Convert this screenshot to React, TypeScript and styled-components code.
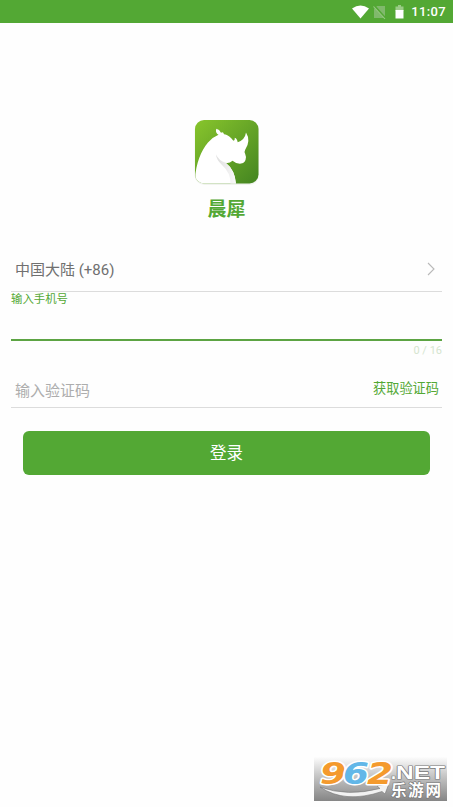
import React from "react";
import styled, { createGlobalStyle } from "styled-components";

const Global = createGlobalStyle`
  * { box-sizing: border-box; }
  body { margin: 0; background: #fefefe; font-family: Roboto, "Noto Sans CJK SC", sans-serif; }
`;
const Screen = styled.div`
  width: 453px; height: 807px; overflow: hidden; background: #fefefe;
  display: flex; flex-direction: column;
`;
const StatusBar = styled.header`
  height: 23px; flex: none; background: #53a834; color: #fff;
  display: flex; align-items: center; justify-content: flex-end;
  padding-right: 7px;
`;
const Clock = styled.time`
  font-size: 13px; line-height: 22px; font-weight: 500; letter-spacing: 0.35px; margin-left: 6px;
`;
const Brand = styled.section`
  height: 229px; flex: none; padding: 97px 0 0;
  display: flex; flex-direction: column; align-items: center;
`;
const AppName = styled.h1`
  margin: 11px 0 0; font-size: 19px; line-height: 29px; font-weight: 700; color: #53a834;
`;
const Form = styled.form`
  padding: 0 11px; display: flex; flex-direction: column;
`;
const Row = styled.div<{ $height: number }>`
  height: ${(p) => p.$height}px; padding: 0 3px 0 4px;
  display: flex; align-items: center; justify-content: space-between;
  border-bottom: 1px solid #dcdcdc;
`;
const RowText = styled.span<{ $muted?: boolean }>`
  font-size: 15px; line-height: 22px; color: ${(p) => (p.$muted ? "#adadad" : "#707070")};
  margin-top: ${(p) => (p.$muted ? 3 : -3)}px;
`;
const PhoneField = styled.div`
  height: 49px; border-bottom: 2px solid #5ca443;
`;
const FieldLabel = styled.label`
  display: block; font-size: 11.4px; line-height: 15px; color: #53a834;
`;
const Counter = styled.span`
  height: 30px; text-align: right; font-size: 11px; line-height: 20px;
  color: #d5e5cf;
`;
const CodeButton = styled.button`
  border: 0; background: none; padding: 0; font: inherit; font-size: 13.2px;
  line-height: 20px; color: #53a834; margin-top: 0;
`;
const LoginButton = styled.button`
  height: 44px; margin: 23px 12px 0; border: 0; border-radius: 6px;
  background: #53a834; color: #fff; font: inherit; font-size: 16.5px; line-height: 44px; padding: 1px 0 0;
`;
const Watermark = styled.footer`
  width: 133px; height: 44px; margin: auto 6px 6px auto;
  background: linear-gradient(#fdfdfd, #c9c9c9 40%, #858585);
`;
const Drawing = styled.svg`
  display: block; overflow: visible; flex: none;
`;
const Arrow = styled(Drawing)`
  margin: -6px 4px 0 0;
`;

const StatusIcons = () => (
  <Drawing width="53" height="22" viewBox="0 0 53 22">
    <path d="M0 7.5Q8.5 1.5 17 7.5L8.5 17.5Z" fill="#fff" />
    <path d="M25 5h8v12H22V8z" fill="#80b96c" />
    <path d="M21.5 4l12.5 14" stroke="#53a834" strokeWidth="2.2" />
    <path d="M21.5 5.5l11.5 12.5" stroke="#9acb87" strokeWidth="1.1" />
    <path d="M43.5 5.5H46V4h3v1.5h2.5V10h-8z" fill="#9acb87" />
    <path d="M43.5 9h8v8.5h-8z" fill="#fff" />
  </Drawing>
);

const RhinoLogo = () => (
  <Drawing width="64" height="64" viewBox="0 0 64 64">
    <defs>
      <linearGradient id="leaf" x1="0" y1="0" x2="1" y2="1">
        <stop stopColor="#88c52c" /><stop offset="1" stopColor="#438421" />
      </linearGradient>
      <linearGradient id="throat" x1="0" x2="1">
        <stop stopColor="#dedede" /><stop offset="1" stopColor="#fafafa" />
      </linearGradient>
      <clipPath id="tile"><rect width="63.5" height="63.5" rx="9" /></clipPath>
    </defs>
    <rect x="-.5" y="0" width="64.5" height="65" rx="10" fill="#f1f3ef" />
    <g clipPath="url(#tile)">
      <rect width="64" height="64" fill="url(#leaf)" />
      <path d="M0 64V59C1 43 6 31 13 22.5Q17 17.5 23.5 14.8Q20 13 21.3 8.8Q24.5 9.5 26 12.8Q28.2 11.4 29 14.3C33 14.5 36 18 38.5 20.8Q40 20.5 39.8 17.8Q42 18.5 42.7 22.3Q50 19.5 51 12.4Q56 20.5 50.3 29.5Q49 31.5 50.2 34L51 37Q50.7 43 46 43.6Q41 44 37.5 40.8Q34 43.8 30.7 42.8Q40 50 41 64Z" fill="#fff" />
      <path d="M21 34.5Q24 41 30.7 42.8Q40 50 41 64H35.5Q36 53 27 45Q21.5 40 21 34.5Z" fill="url(#throat)" />
    </g>
  </Drawing>
);

const SiteMark = () => (
  <Drawing width="133" height="44" viewBox="0 0 133 44" fontFamily="Liberation Sans, Noto Sans CJK SC, sans-serif" fontWeight="700">
    <path d="M6 30Q33 40 66 31.5L63 29L75 26.5L71 37L68 34.5Q31 47 6 30Z" fill="#f2f2f2" stroke="#777" strokeWidth=".6" />
    <g fontFamily="DejaVu Sans, sans-serif" fontSize="31" fontStyle="italic" stroke="#fff" strokeWidth="3" paintOrder="stroke" strokeLinejoin="round">
      <text x="6" y="27" textLength="26" lengthAdjust="spacingAndGlyphs" fill="#f49a2d">9</text>
      <text x="29" y="27" textLength="26" lengthAdjust="spacingAndGlyphs" fill="#62b7e8">6</text>
      <text x="53" y="27" textLength="26" lengthAdjust="spacingAndGlyphs" fill="#f49a2d">2</text>
    </g>
    <g fill="#fff" stroke="#777" strokeWidth="1.2" paintOrder="stroke">
      <text x="77" y="21.5" fontSize="18" textLength="6">.</text>
      <g strokeLinejoin="round">
        <text x="82" y="21.5" fontSize="18" textLength="49" lengthAdjust="spacingAndGlyphs">NET</text>
      </g>
      <text x="77" y="39" fontSize="15.5" textLength="50">乐游网</text>
    </g>
  </Drawing>
);

export default function App() {
  return (
    <Screen>
      <Global />
      <StatusBar><StatusIcons /><Clock>11:07</Clock></StatusBar>
      <Brand><RhinoLogo /><AppName>晨犀</AppName></Brand>
      <Form>
        <Row $height={40}>
          <RowText>中国大陆 (+86)</RowText>
          <Arrow width="8" height="14" viewBox="0 0 8 14">
            <path d="M1 1l6 6-6 6" fill="none" stroke="#b9b9b9" strokeWidth="1.1" />
          </Arrow>
        </Row>
        <PhoneField><FieldLabel>输入手机号</FieldLabel></PhoneField>
        <Counter>0 / 16</Counter>
        <Row $height={37}>
          <RowText $muted>输入验证码</RowText>
          <CodeButton type="button">获取验证码</CodeButton>
        </Row>
        <LoginButton type="button">登录</LoginButton>
      </Form>
      <Watermark><SiteMark /></Watermark>
    </Screen>
  );
}
